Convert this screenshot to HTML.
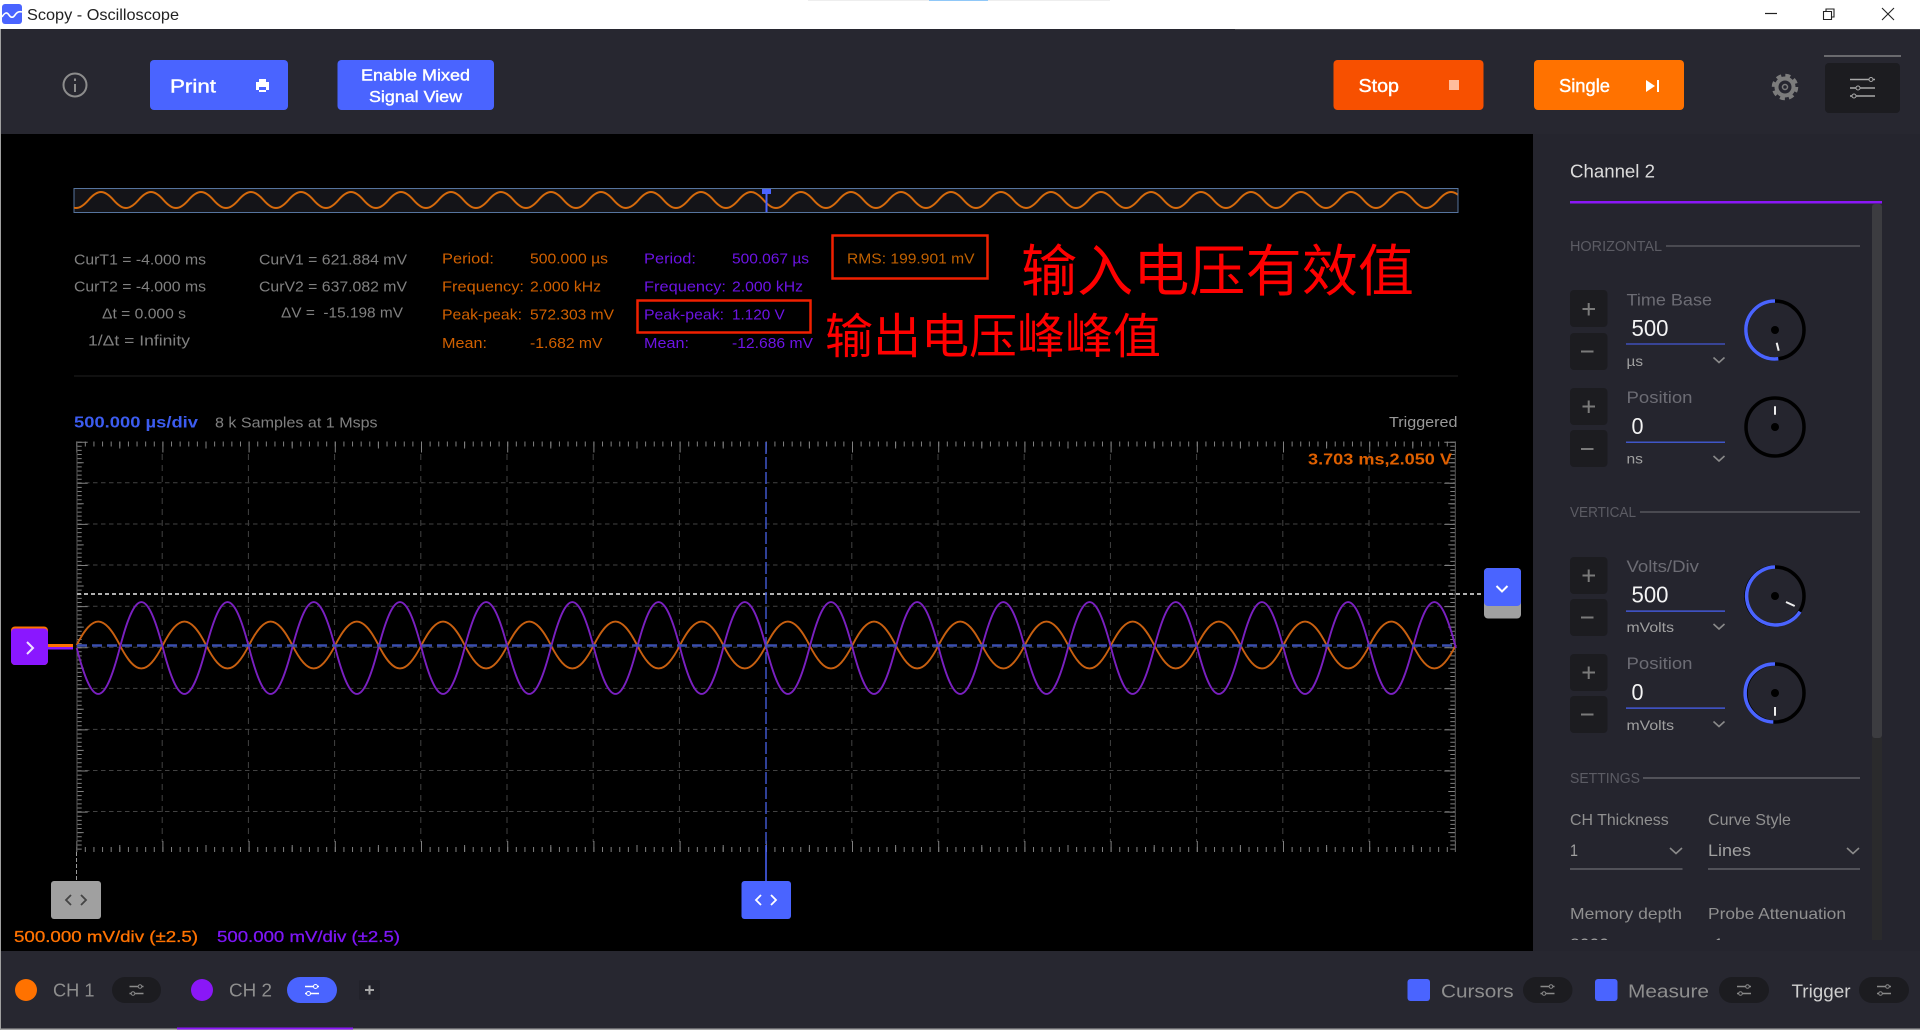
<!DOCTYPE html>
<html><head><meta charset="utf-8"><title>Scopy - Oscilloscope</title>
<style>
html,body{margin:0;padding:0;background:#000;width:1920px;height:1030px;overflow:hidden}
svg{display:block;font-family:"Liberation Sans","Noto Sans CJK SC",sans-serif}
text{white-space:pre}
.o{fill:#d06000;font-size:15px}.p{fill:#6c14e4;font-size:15px}.g{fill:#808080;font-size:15px}
.l{fill:#6c6c74;font-size:17px}.u{fill:#a0a0a0;font-size:14px}.s{fill:#5c5c64;font-size:14.5px}
.v{fill:#f4f4f4;font-size:23px}.m{fill:#909090;font-size:16px}
.w{fill:#fff;font-size:18px;stroke:#fff;stroke-width:.4}
.b{fill:#8e8e8e;font-size:18px}
.c{fill:none;stroke:#8a8a8a;stroke-width:1.6}
.pm{fill:#1c1c20}.t{fill:none;stroke:#7a7a7a;stroke-width:2}
</style></head><body>
<svg width="1920" height="1030" viewBox="0 0 1920 1030" xmlns="http://www.w3.org/2000/svg">
<defs>
<clipPath id="mini"><rect x="74" y="189" width="1383.5" height="22"/></clipPath>
<clipPath id="pan"><rect x="1533" y="134" width="387" height="806"/></clipPath>
<g id="sl"><path d="M-7-3.5H7M-7 3.5H7" stroke-width="1.4" fill="none" stroke="currentColor"/><circle cx="3.5" cy="-3.5" r="1.8" fill="#1c1c20" stroke="currentColor"/><circle cx="-3.5" cy="3.5" r="1.8" fill="#1c1c20" stroke="currentColor"/></g>
</defs>
<rect width="1920" height="1030" fill="#000"/>
<!-- title bar -->
<rect width="1920" height="29" fill="#fff"/>
<rect x="808" width="302" height="1" fill="#eee"/><rect x="929" width="59" height="1" fill="#90c8f8"/>
<rect x="2" y="4" width="20" height="20" rx="3" fill="#4a64ff"/>
<path d="M2 17c3-5 5-5 7-2s4 3 6 0 4-4 7-3" fill="none" stroke="#fff" stroke-width="1.6"/>
<text x="27" y="20" font-size="16" fill="#222" textLength="152" lengthAdjust="spacingAndGlyphs">Scopy - Oscilloscope</text>
<path d="M1765 13.5H1777" stroke="#222" stroke-width="1.2"/>
<path d="M1823.5 11.5h8v8h-8zM1826 11V9h8v8h-2.5" fill="none" stroke="#222" stroke-width="1.1"/>
<path d="M1882 8l12 12M1894 8l-12 12" stroke="#222" stroke-width="1.1"/>
<!-- toolbar -->
<rect y="29" width="1920" height="105" fill="#272730"/>
<rect x="1235" y="29" width="685" height="1" fill="#45454c"/>
<circle cx="75" cy="85" r="11.5" fill="none" stroke="#8c8c8c" stroke-width="2"/>
<path d="M75 84v8M75 78.500v2.500" stroke="#8c8c8c" stroke-width="2"/>
<rect x="150" y="60" width="138" height="50" rx="4" fill="#4a64ff"/>
<text x="170" y="92.500" class="w" textLength="46" lengthAdjust="spacingAndGlyphs">Print</text>
<path d="M259 79h7v3h3v8h-3v2h-7v-2h-3v-8h3z" fill="#fff"/><rect x="259" y="87" width="7" height="3" fill="#4a64ff"/>
<rect x="337.500" y="60" width="156.500" height="50" rx="4" fill="#4a64ff"/>
<text x="361" y="80.500" class="w" style="font-size:16px" textLength="109" lengthAdjust="spacingAndGlyphs">Enable Mixed</text>
<text x="369" y="102" class="w" style="font-size:16px" textLength="93" lengthAdjust="spacingAndGlyphs">Signal View</text>
<rect x="1333.500" y="60" width="150" height="50" rx="4" fill="#f75000"/>
<text x="1358.500" y="92" class="w" textLength="40.500" lengthAdjust="spacingAndGlyphs">Stop</text>
<rect x="1449" y="80" width="10" height="10" fill="#ffbd9c"/>
<rect x="1534" y="60" width="150" height="50" rx="4" fill="#ff7200"/>
<text x="1559" y="92" class="w" textLength="51" lengthAdjust="spacingAndGlyphs">Single</text>
<path d="M1646 80l9 6-9 6z" fill="#fff"/><rect x="1657" y="80" width="2" height="12" fill="#fff"/>
<circle cx="1785" cy="87" r="8.500" fill="none" stroke="#7c7c7c" stroke-width="4"/>
<circle cx="1785" cy="87" r="11.500" fill="none" stroke="#7c7c7c" stroke-width="3.500" stroke-dasharray="5 4.030"/>
<circle cx="1785" cy="87" r="2.500" fill="none" stroke="#7c7c7c" stroke-width="1.500"/>
<rect x="1824" y="55" width="77" height="2" fill="#6a6a6e"/>
<rect x="1825" y="63" width="75" height="50" rx="4" fill="#1c1c20"/>
<path d="M1850 79.500h25M1850 88h25M1850 96h25" stroke="#a8a8a8" stroke-width="1.600"/>
<circle cx="1871" cy="79.500" r="2" fill="#1c1c20" stroke="#a8a8a8"/><circle cx="1858" cy="88" r="2" fill="#1c1c20" stroke="#a8a8a8"/><circle cx="1854" cy="96" r="2" fill="#1c1c20" stroke="#a8a8a8"/>
<!-- minimap -->
<rect x="74" y="188.500" width="1384" height="24" fill="#141418" stroke="#56749e" stroke-width="1"/>
<path clip-path="url(#mini)" fill="none" stroke="#d56a0c" stroke-width="2" d="M63.500 200c9.250 10.700 15.750 10.700 25 0s15.750-10.700 25 0s15.750 10.700 25 0s15.750-10.700 25 0s15.750 10.700 25 0s15.750-10.700 25 0s15.750 10.700 25 0s15.750-10.700 25 0s15.750 10.700 25 0s15.750-10.700 25 0s15.750 10.700 25 0s15.750-10.700 25 0s15.750 10.700 25 0s15.750-10.700 25 0s15.750 10.700 25 0s15.750-10.700 25 0s15.750 10.700 25 0s15.750-10.700 25 0s15.750 10.700 25 0s15.750-10.700 25 0s15.750 10.700 25 0s15.750-10.700 25 0s15.750 10.700 25 0s15.750-10.700 25 0s15.750 10.700 25 0s15.750-10.700 25 0s15.750 10.700 25 0s15.750-10.700 25 0s15.750 10.700 25 0s15.750-10.700 25 0s15.750 10.700 25 0s15.750-10.700 25 0s15.750 10.700 25 0s15.750-10.700 25 0s15.750 10.700 25 0s15.750-10.700 25 0s15.750 10.700 25 0s15.750-10.700 25 0s15.750 10.700 25 0s15.750-10.700 25 0s15.750 10.700 25 0s15.750-10.700 25 0s15.750 10.700 25 0s15.750-10.700 25 0s15.750 10.700 25 0s15.750-10.700 25 0s15.750 10.700 25 0s15.750-10.700 25 0s15.750 10.700 25 0s15.750-10.700 25 0s15.750 10.700 25 0s15.750-10.700 25 0s15.750 10.700 25 0s15.750-10.700 25 0s15.750 10.700 25 0s15.750-10.700 25 0s15.750 10.700 25 0s15.750-10.700 25 0s15.750 10.700 25 0s15.750-10.700 25 0"/>
<rect x="762" y="189" width="9" height="5" fill="#4a64ff"/><rect x="765.500" y="189" width="2" height="23" fill="#4a64ff"/>
<!-- measurements -->
<text x="74" y="264.500" class="g" textLength="132" lengthAdjust="spacingAndGlyphs">CurT1 = -4.000 ms</text>
<text x="74" y="291.500" class="g" textLength="132" lengthAdjust="spacingAndGlyphs">CurT2 = -4.000 ms</text>
<text x="102" y="318.500" class="g" textLength="84" lengthAdjust="spacingAndGlyphs">Δt = 0.000 s</text>
<text x="88" y="345.500" class="g" textLength="102" lengthAdjust="spacingAndGlyphs">1/Δt = Infinity</text>
<text x="259" y="264.500" class="g" textLength="148" lengthAdjust="spacingAndGlyphs">CurV1 = 621.884 mV</text>
<text x="259" y="291.500" class="g" textLength="148" lengthAdjust="spacingAndGlyphs">CurV2 = 637.082 mV</text>
<text x="281" y="317.500" class="g" textLength="122" lengthAdjust="spacingAndGlyphs">ΔV =  -15.198 mV</text>
<text x="442" y="263.500" class="o" textLength="52" lengthAdjust="spacingAndGlyphs">Period:</text>
<text x="530" y="263.500" class="o" textLength="78" lengthAdjust="spacingAndGlyphs">500.000 µs</text>
<text x="442" y="291.500" class="o" textLength="82" lengthAdjust="spacingAndGlyphs">Frequency:</text>
<text x="530" y="291.500" class="o" textLength="71" lengthAdjust="spacingAndGlyphs">2.000 kHz</text>
<text x="442" y="319.500" class="o" textLength="80" lengthAdjust="spacingAndGlyphs">Peak-peak:</text>
<text x="530" y="319.500" class="o" textLength="84" lengthAdjust="spacingAndGlyphs">572.303 mV</text>
<text x="442" y="348" class="o" textLength="45" lengthAdjust="spacingAndGlyphs">Mean:</text>
<text x="530" y="348" class="o" textLength="72.500" lengthAdjust="spacingAndGlyphs">-1.682 mV</text>
<text x="644" y="263.500" class="p" textLength="52" lengthAdjust="spacingAndGlyphs">Period:</text>
<text x="732" y="263.500" class="p" textLength="77" lengthAdjust="spacingAndGlyphs">500.067 µs</text>
<text x="644" y="291.500" class="p" textLength="82" lengthAdjust="spacingAndGlyphs">Frequency:</text>
<text x="732" y="291.500" class="p" textLength="71" lengthAdjust="spacingAndGlyphs">2.000 kHz</text>
<text x="644" y="319.500" class="p" textLength="80" lengthAdjust="spacingAndGlyphs">Peak-peak:</text>
<text x="732" y="319.500" class="p" textLength="52.700" lengthAdjust="spacingAndGlyphs">1.120 V</text>
<text x="644" y="348" class="p" textLength="45" lengthAdjust="spacingAndGlyphs">Mean:</text>
<text x="732" y="348" class="p" textLength="81" lengthAdjust="spacingAndGlyphs">-12.686 mV</text>
<text x="847" y="263.500" class="o" style="fill:#c06000" textLength="127.600" lengthAdjust="spacingAndGlyphs">RMS: 199.901 mV</text>
<rect x="637.500" y="300.500" width="173" height="32" fill="none" stroke="#f02000" stroke-width="2.500"/>
<rect x="832.500" y="235.500" width="155" height="43" fill="none" stroke="#f02000" stroke-width="2.500"/>
<text x="1021" y="291" font-size="56" font-weight="400" fill="#ff0000" textLength="393" lengthAdjust="spacingAndGlyphs" style="font-family:'Noto Sans CJK SC','WenQuanYi Zen Hei',sans-serif">输入电压有效值</text>
<text x="825" y="353" font-size="48" font-weight="400" fill="#ff0000" textLength="336" lengthAdjust="spacingAndGlyphs" style="font-family:'Noto Sans CJK SC','WenQuanYi Zen Hei',sans-serif">输出电压峰峰值</text>
<rect x="74" y="375.500" width="1384" height="1" fill="#1f1f1f"/>
<text x="74" y="427.500" font-size="15.500" font-weight="700" fill="#3c5cf0" textLength="124" lengthAdjust="spacingAndGlyphs">500.000 µs/div</text>
<text x="215" y="427.500" class="g" textLength="162.600" lengthAdjust="spacingAndGlyphs">8 k Samples at 1 Msps</text>
<text x="1389" y="427" class="g" style="fill:#999" textLength="68.500" lengthAdjust="spacingAndGlyphs">Triggered</text>
<!-- plot grid -->
<path d="M162.200 454V842M248.400 454V842M334.600 454V842M420.800 454V842M507 454V842M593.200 454V842M679.400 454V842M851.800 454V842M938 454V842M1024.200 454V842M1110.400 454V842M1196.600 454V842M1282.800 454V842M1369 454V842" stroke="#424242" stroke-width="1" stroke-dasharray="6 5" fill="none"/>
<path d="M77 482.800H1455M77 524H1455M77 565H1455M77 606.200H1455M77 647.300H1455M77 688.400H1455M77 729.400H1455M77 770.500H1455M77 811.500H1455" stroke="#424242" stroke-width="1" stroke-dasharray="4.500 3.500" fill="none"/>
<!-- ticks -->
<g fill="none" stroke="#808080">
<path d="M76.200 444H1456" stroke-width="5" stroke-dasharray="1 7.620"/>
<path d="M119.300 445H1456" stroke-width="7" stroke-dasharray="1 85.200"/>
<path d="M76.200 447H1456" stroke-width="11" stroke-dasharray="1 85.200"/>
<path d="M76.200 849.500H1456" stroke-width="5" stroke-dasharray="1 7.620"/>
<path d="M119.300 848.500H1456" stroke-width="7" stroke-dasharray="1 85.200"/>
<path d="M76.200 846.500H1456" stroke-width="11" stroke-dasharray="1 85.200"/>
<path d="M79.200 441.700V852.500" stroke-width="5" stroke-dasharray="1 3.110"/>
<path d="M80.200 462.200V852.500" stroke-width="7" stroke-dasharray="1 40.100"/>
<path d="M82.200 441.700V852.500" stroke-width="11" stroke-dasharray="1 40.100"/>
<path d="M1452.800 441.700V852.500" stroke-width="5" stroke-dasharray="1 3.110"/>
<path d="M1451.800 462.200V852.500" stroke-width="7" stroke-dasharray="1 40.100"/>
<path d="M1449.800 441.700V852.500" stroke-width="11" stroke-dasharray="1 40.100"/>
<path d="M77 442V852" stroke-width="1" stroke="#555"/>
<path d="M1455.300 442V852" stroke-width="1" stroke="#555"/>
</g>
<!-- trigger level -->
<path d="M77 594H1484" stroke="#b0b0b0" stroke-width="2" stroke-dasharray="4 3"/>
<!-- waves -->
<path fill="none" stroke="#c86010" stroke-width="1.900" d="M76.700 645c15.900-31.300 27.200-31.300 43.100 0s27.200 31.300 43.100 0s27.200-31.300 43.100 0s27.200 31.300 43.100 0s27.200-31.300 43.100 0s27.200 31.300 43.100 0s27.200-31.300 43.100 0s27.200 31.300 43.100 0s27.200-31.300 43.100 0s27.200 31.300 43.100 0s27.200-31.300 43.100 0s27.200 31.300 43.100 0s27.200-31.300 43.100 0s27.200 31.300 43.100 0s27.200-31.300 43.100 0s27.200 31.300 43.100 0s27.200-31.300 43.100 0s27.200 31.300 43.100 0s27.200-31.300 43.100 0s27.200 31.300 43.100 0s27.200-31.300 43.100 0s27.200 31.300 43.100 0s27.200-31.300 43.100 0s27.200 31.300 43.100 0s27.200-31.300 43.100 0s27.200 31.300 43.100 0s27.200-31.300 43.100 0s27.200 31.300 43.100 0s27.200-31.300 43.100 0s27.200 31.300 43.100 0s27.200-31.300 43.100 0s27.200 31.300 43.100 0"/>
<path fill="none" stroke="#7a20c0" stroke-width="1.900" d="M76.700 648c15.900 61.300 27.200 61.300 43.100 0s27.200-61.300 43.100 0s27.200 61.300 43.100 0s27.200-61.300 43.100 0s27.200 61.300 43.100 0s27.200-61.300 43.100 0s27.200 61.300 43.100 0s27.200-61.300 43.100 0s27.200 61.300 43.100 0s27.200-61.300 43.100 0s27.200 61.300 43.100 0s27.200-61.300 43.100 0s27.200 61.300 43.100 0s27.200-61.300 43.100 0s27.200 61.300 43.100 0s27.200-61.300 43.100 0s27.200 61.300 43.100 0s27.200-61.300 43.100 0s27.200 61.300 43.100 0s27.200-61.300 43.100 0s27.200 61.300 43.100 0s27.200-61.300 43.100 0s27.200 61.300 43.100 0s27.200-61.300 43.100 0s27.200 61.300 43.100 0s27.200-61.300 43.100 0s27.200 61.300 43.100 0s27.200-61.300 43.100 0s27.200 61.300 43.100 0s27.200-61.300 43.100 0s27.200 61.300 43.100 0s27.200-61.300 43.100 0"/>
<path d="M77 645.500H1455" stroke="#3a4fb0" stroke-width="2.500" stroke-dasharray="10 5"/>
<path d="M766 442V845" stroke="#3f56c8" stroke-width="1.500" stroke-dasharray="12 3"/>
<path d="M766 845V881" stroke="#4a64ff" stroke-width="1.500"/>
<path d="M76.500 852V881" stroke="#999" stroke-width="1" stroke-dasharray="4 2"/>
<text x="1308" y="464.500" font-size="15.500" font-weight="700" fill="#e06000" textLength="144" lengthAdjust="spacingAndGlyphs">3.703 ms,2.050 V</text>
<!-- handles -->
<rect x="48" y="644" width="25" height="3" fill="#ff7200"/><rect x="48" y="647" width="25" height="2.500" fill="#8a17ff"/>
<rect x="11" y="626.500" width="37" height="38.500" rx="4" fill="#ff7200"/>
<rect x="11" y="628.500" width="37" height="36.500" rx="4" fill="#8a17ff"/>
<path d="M27 642l6 6-6 6" fill="none" stroke="#f0e0ff" stroke-width="2"/>
<rect x="1484" y="568" width="37" height="50.500" rx="4" fill="#a0a0a0"/>
<rect x="1484" y="568" width="37" height="38" rx="4" fill="#4a64ff"/>
<path d="M1496.500 586l5.500 5.500 5.500-5.500" fill="none" stroke="#fff" stroke-width="2"/>
<rect x="51" y="881" width="50" height="38" rx="3" fill="#a0a0a0"/>
<path d="M71 895l-5 5 5 5M81 895l5 5-5 5" fill="none" stroke="#444" stroke-width="1.800"/>
<rect x="741.500" y="881" width="49.500" height="38" rx="3" fill="#4a64ff"/>
<path d="M761 895l-5 5 5 5M771 895l5 5-5 5" fill="none" stroke="#fff" stroke-width="1.800"/>
<text x="14" y="942" font-size="15.500" fill="#ff7200" stroke="#ff7200" stroke-width=".3" textLength="184" lengthAdjust="spacingAndGlyphs">500.000 mV/div (±2.5)</text>
<text x="217" y="942" font-size="15.500" fill="#7d16f5" stroke="#7d16f5" stroke-width=".3" textLength="183" lengthAdjust="spacingAndGlyphs">500.000 mV/div (±2.5)</text>
<!-- right panel -->
<rect x="1533" y="134" width="387" height="817" fill="#25252e"/>
<text x="1570" y="177.500" font-size="18" fill="#dcdcdc" textLength="85" lengthAdjust="spacingAndGlyphs">Channel 2</text>
<rect x="1570" y="201" width="312" height="2.500" fill="#8a17f7"/>
<rect x="1872" y="204" width="10" height="736" fill="#2a2a2c"/>
<rect x="1872" y="204" width="10" height="534" rx="3" fill="#3c3c40"/>
<!-- horizontal -->
<text x="1570" y="251" class="s" textLength="92" lengthAdjust="spacingAndGlyphs">HORIZONTAL</text>
<rect x="1666" y="245.500" width="194" height="1" fill="#707074"/>
<g class="pm">
<rect x="1570" y="290" width="37.500" height="37" rx="4"/><rect x="1570" y="333" width="37.500" height="37" rx="4"/>
<rect x="1570" y="388" width="37.500" height="37" rx="4"/><rect x="1570" y="430" width="37.500" height="37" rx="4"/>
<rect x="1570" y="557" width="37.500" height="37" rx="4"/><rect x="1570" y="599" width="37.500" height="37" rx="4"/>
<rect x="1570" y="654" width="37.500" height="37" rx="4"/><rect x="1570" y="696" width="37.500" height="37" rx="4"/>
</g>
<path class="t" d="M1582.500 309h12.500M1588.700 303v12.500M1581 351.500h12.500M1582.500 406.500h12.500M1588.700 400.500v12.500M1581 449h12.500M1582.500 575.500h12.500M1588.700 569.500v12.500M1581 617.500h12.500M1582.500 672.500h12.500M1588.700 666.500v12.500M1581 714.500h12.500"/>
<text x="1626.500" y="305.500" class="l" textLength="85.500" lengthAdjust="spacingAndGlyphs">Time Base</text>
<text x="1631.500" y="336" class="v" textLength="37" lengthAdjust="spacingAndGlyphs">500</text>
<rect x="1626" y="343.500" width="99" height="1" fill="#4a64ff"/>
<text x="1626.500" y="366" class="u" textLength="16.500" lengthAdjust="spacingAndGlyphs">µs</text>
<text x="1626.500" y="403" class="l" textLength="66" lengthAdjust="spacingAndGlyphs">Position</text>
<text x="1631.500" y="434" class="v" textLength="12" lengthAdjust="spacingAndGlyphs">0</text>
<rect x="1626" y="441.500" width="99" height="1.500" fill="#3f56c8"/>
<text x="1626.500" y="463.500" class="u" textLength="16.500" lengthAdjust="spacingAndGlyphs">ns</text>
<text x="1570" y="517" class="s" textLength="66" lengthAdjust="spacingAndGlyphs">VERTICAL</text>
<rect x="1640" y="511.500" width="220" height="1" fill="#707074"/>
<text x="1626.500" y="572" class="l" textLength="72.500" lengthAdjust="spacingAndGlyphs">Volts/Div</text>
<text x="1631.500" y="602.500" class="v" textLength="37" lengthAdjust="spacingAndGlyphs">500</text>
<rect x="1626" y="610.500" width="99" height="1.200" fill="#4a64ff"/>
<text x="1626.500" y="632" class="u" textLength="47.500" lengthAdjust="spacingAndGlyphs">mVolts</text>
<text x="1626.500" y="669" class="l" textLength="66" lengthAdjust="spacingAndGlyphs">Position</text>
<text x="1631.500" y="700" class="v" textLength="12" lengthAdjust="spacingAndGlyphs">0</text>
<rect x="1626" y="707.500" width="99" height="1.200" fill="#4a64ff"/>
<text x="1626.500" y="730" class="u" textLength="47.500" lengthAdjust="spacingAndGlyphs">mVolts</text>
<path class="c" d="M1713.500 357.500l5.500 5 5.500-5M1713.500 456l5.500 5 5.500-5M1713.500 624l5.500 5 5.500-5M1713.500 721.500l5.500 5 5.500-5M1670 848l6 5.500 6-5.500M1847 848l6 5.500 6-5.500"/>
<!-- dials -->
<g fill="none" stroke-width="3.500">
<circle cx="1775" cy="330" r="29" stroke="#000"/>
<path d="M1775 301A29 29 0 1 0 1778.300 358.800" stroke="#4a64ff"/>
<circle cx="1775" cy="427" r="29" stroke="#000"/>
<circle cx="1775" cy="596" r="29" stroke="#000"/>
<path d="M1775 567A29 29 0 1 0 1800 611.700" stroke="#4a64ff"/>
<circle cx="1775" cy="693" r="29" stroke="#000"/>
<path d="M1775 664A29 29 0 0 0 1773.300 722" stroke="#4a64ff"/>
</g>
<g fill="#000"><circle cx="1775" cy="330" r="4"/><circle cx="1775" cy="427" r="4"/><circle cx="1775" cy="596" r="4"/><circle cx="1775" cy="693" r="4"/></g>
<path d="M1776.700 342.700l2 8M1775 406.300v8.400M1786 602l8.700 4M1775 707v8.700" stroke="#eee" stroke-width="2" fill="none"/>
<!-- settings -->
<text x="1570" y="783" class="s" textLength="70" lengthAdjust="spacingAndGlyphs">SETTINGS</text>
<rect x="1643" y="777.500" width="217" height="1" fill="#808084"/>
<text x="1570" y="825" class="m" textLength="98.700" lengthAdjust="spacingAndGlyphs">CH Thickness</text>
<text x="1708" y="825" class="m" textLength="83" lengthAdjust="spacingAndGlyphs">Curve Style</text>
<text x="1570" y="856" class="m" style="font-size:17px;fill:#a0a0a0" textLength="8" lengthAdjust="spacingAndGlyphs">1</text>
<text x="1708" y="856" class="m" style="font-size:17px;fill:#a0a0a0" textLength="43" lengthAdjust="spacingAndGlyphs">Lines</text>
<rect x="1570" y="868.500" width="112.500" height="1" fill="#808084"/><rect x="1708" y="868.500" width="152" height="1" fill="#808084"/>
<text x="1570" y="919" class="m" textLength="112" lengthAdjust="spacingAndGlyphs">Memory depth</text>
<text x="1708" y="919" class="m" textLength="138" lengthAdjust="spacingAndGlyphs">Probe Attenuation</text>
<g clip-path="url(#pan)">
<text x="1570" y="950" class="m" style="font-size:17px;fill:#a0a0a0" textLength="39" lengthAdjust="spacingAndGlyphs">8000</text>
<text x="1714" y="950" class="m" style="font-size:17px;fill:#a0a0a0">1</text>
</g>
<rect x="1533" y="940" width="387" height="11" fill="#25252e"/>
<!-- bottom bar -->
<rect y="951" width="1920" height="79" fill="#272730"/>
<rect y="1028.500" width="1920" height="1.500" fill="#a8a8a8"/>
<rect x="177" y="1027.500" width="176" height="2" fill="#8a17f7"/>
<circle cx="26" cy="990" r="11" fill="#ff7200"/>
<text x="53" y="996.500" class="b" textLength="41.500" lengthAdjust="spacingAndGlyphs">CH 1</text>
<rect x="112" y="977" width="49" height="26" rx="13" fill="#1c1c20"/>
<use href="#sl" x="136.500" y="990" color="#8a8a8a"/>
<circle cx="202" cy="990" r="11" fill="#8a17f7"/>
<text x="229" y="996.500" class="b" textLength="43" lengthAdjust="spacingAndGlyphs">CH 2</text>
<rect x="287" y="977" width="50" height="26" rx="13" fill="#4a64ff"/>
<path d="M305 986.500h14M305 993.500h14" stroke="#fff" stroke-width="1.500"/><circle cx="315.500" cy="986.500" r="2" fill="#4a64ff" stroke="#fff"/><circle cx="308.500" cy="993.500" r="2" fill="#4a64ff" stroke="#fff"/>
<rect x="359" y="980" width="21" height="20" rx="2" fill="#22222a"/>
<path d="M365 990h9M369.500 985.500v9" stroke="#a8a8a8" stroke-width="2"/>
<rect x="1407.500" y="979" width="22.500" height="22" rx="3" fill="#4a64ff"/>
<text x="1441" y="997.500" class="b" textLength="72.600" lengthAdjust="spacingAndGlyphs">Cursors</text>
<rect x="1523" y="977" width="49.500" height="26" rx="13" fill="#1c1c20"/>
<use href="#sl" x="1547.500" y="990" color="#8a8a8a"/>
<rect x="1595" y="979" width="22.500" height="22" rx="3" fill="#4a64ff"/>
<text x="1628" y="997.500" class="b" textLength="81" lengthAdjust="spacingAndGlyphs">Measure</text>
<rect x="1719" y="977" width="50" height="26" rx="13" fill="#1c1c20"/>
<use href="#sl" x="1744" y="990" color="#8a8a8a"/>
<text x="1791.500" y="997.500" class="b" style="fill:#d0d0d0" textLength="59" lengthAdjust="spacingAndGlyphs">Trigger</text>
<rect x="1859" y="977" width="50" height="26" rx="13" fill="#1c1c20"/>
<use href="#sl" x="1884" y="990" color="#8a8a8a"/>
<!-- window left edge -->
<rect x="0" y="29" width="1" height="1001" fill="#a0a0a0"/>
</svg>
</body></html>
